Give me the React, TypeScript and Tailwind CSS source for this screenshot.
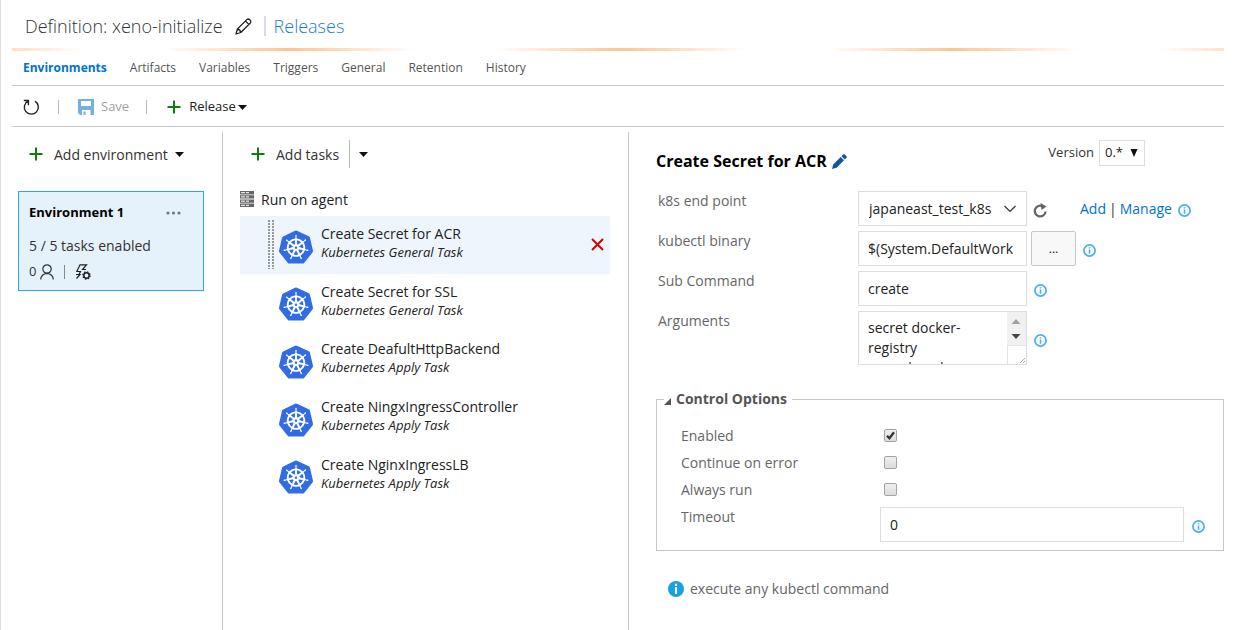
import React, { useState } from "react";
import { SiKubernetes } from "react-icons/si";

const tabs = ["Environments", "Artifacts", "Variables", "Triggers", "General", "Retention", "History"];

const tasks = [
  { name: "Create Secret for ACR", kind: "Kubernetes General Task" },
  { name: "Create Secret for SSL", kind: "Kubernetes General Task" },
  { name: "Create DeafultHttpBackend", kind: "Kubernetes Apply Task" },
  { name: "Create NingxIngressController", kind: "Kubernetes Apply Task" },
  { name: "Create NginxIngressLB", kind: "Kubernetes Apply Task" },
];

function Plus() {
  return (
    <svg width="14" height="14" viewBox="0 0 14 14" aria-hidden="true" className="shrink-0">
      <path d="M7 0.5V13.5M0.5 7H13.5" stroke="#107c10" strokeWidth="2" />
    </svg>
  );
}

function Caret() {
  return (
    <svg width="9" height="5" viewBox="0 0 9 5" aria-hidden="true" className="shrink-0">
      <path d="M0 0H9L4.5 5Z" fill="#111" />
    </svg>
  );
}

function InfoButton({ label }: { label: string }) {
  return (
    <button type="button" aria-label={label} className="mt-1 shrink-0">
      <svg width="13" height="13" viewBox="0 0 13 13" className="block">
        <circle cx="6.5" cy="6.5" r="5.6" fill="#fff" stroke="#45b2ea" strokeWidth="1.7" />
        <path d="M6.5 3.2V4.6M6.5 5.6V9.8" stroke="#45b2ea" strokeWidth="1.6" />
      </svg>
    </button>
  );
}

function KubernetesLogo() {
  return (
    <svg width="34" height="34" viewBox="0 0 24 24" aria-hidden="true" className="shrink-0">
      <circle cx="12" cy="12" r="9" fill="#fff" />
      <SiKubernetes size={24} color="#326ce5" />
    </svg>
  );
}

function OutlinePencil() {
  return (
    <svg width="17" height="17" viewBox="0 0 17 17" fill="none" stroke="#222" strokeWidth="1.3" strokeLinejoin="round">
      <path d="M1 16L2.4 11L11.8 1.6Q13.2 0.3 14.8 1.8Q16.5 3.6 15.3 5L5.8 14.5ZM2.4 11Q5.2 11.6 5.8 14.5M10.4 3L13.9 6.4" />
    </svg>
  );
}

function Accent() {
  return (
    <div className="h-[3px] bg-[repeating-linear-gradient(90deg,#fdc490_0px,#fee0c6_60px,#ffffff_126px,#ffffff_206px,#fee0c6_272px,#fdc490_332px)] bg-[position:-55px_0px] bg-[length:332px_3px]" />
  );
}

function Checkbox({ id, initial }: { id: string; initial: boolean }) {
  const [on, setOn] = useState(initial);
  return (
    <span className="relative ml-1 flex">
      <input
        id={id}
        type="checkbox"
        checked={on}
        onChange={() => setOn(!on)}
        className="h-[13px] w-[13px] appearance-none rounded-[2px] border border-[#a3a3a3] bg-linear-to-b from-[#efefef] to-[#dcdcdc]"
      />
      {on && (
        <svg width="13" height="13" viewBox="0 0 13 13" aria-hidden="true" className="pointer-events-none absolute inset-0">
          <path d="M3 6.8L5.4 9.3L10 3.2" fill="none" stroke="#333" strokeWidth="2.3" />
        </svg>
      )}
    </span>
  );
}

function Field({ id, label, children }: { id: string; label: string; children: React.ReactNode }) {
  return (
    <div className="flex items-start">
      <label htmlFor={id} className="w-[202px] shrink-0 pl-0.5 leading-5 text-[#666]">
        {label}
      </label>
      <div className="flex items-center">{children}</div>
    </div>
  );
}

function Header() {
  return (
    <header>
      <div className="flex h-12 items-center pt-1 pl-[13px] text-[18px] font-light">
        <h1 className="text-[#333]">Definition: xeno-initialize</h1>
        <button type="button" aria-label="Rename definition" className="ml-3">
          <OutlinePencil />
        </button>
        <a href="#releases" className="ml-3 border-l-2 border-[#dcdce6] pl-2 leading-5 text-[#1a7fd0]">
          Releases
        </a>
      </div>
      <Accent />
      <nav className="flex h-[35px] items-center gap-[23px] border-b border-[#c8c8c8] pl-[11px] text-[12px] text-[#555]">
        {tabs.map((tab, i) => (
          <a key={tab} href={"#" + tab.toLowerCase()} className={i === 0 ? "font-bold text-[#0072d0]" : ""}>
            {tab}
          </a>
        ))}
      </nav>
      <div className="flex h-[41px] items-center border-b border-[#c8c8c8] pt-0.5 pl-[11px] text-[13px]">
        <button type="button" aria-label="Refresh">
          <svg width="17" height="17" viewBox="0 0 17 17" fill="none" stroke="#222" strokeWidth="1.4">
            <path d="M5.2 1.9A7 7 0 1 0 12 2.2M0.8 1.5H5.4V6.3" />
          </svg>
        </button>
        <span className="ml-[18px] h-3.5 w-px bg-[#bbb]" />
        <button type="button" disabled className="ml-[19px] flex items-center gap-[7px] text-[#a0a0a0]">
          <svg width="16" height="16" viewBox="0 0 16 16" aria-hidden="true">
            <path
              fillRule="evenodd"
              fill="#77afe0"
              d="M0 0H16V16H12.500V11H4V16H2L0 14ZM3 2V7H13V2ZM5.500 12.500H7.500V16H5.500Z"
            />
          </svg>
          Save
        </button>
        <span className="ml-[17px] h-3.5 w-px bg-[#bbb]" />
        <button type="button" className="ml-5 flex items-center text-[#222]">
          <Plus />
          <span className="mr-0.5 ml-2">Release</span>
          <Caret />
        </button>
      </div>
    </header>
  );
}

function EnvironmentPanel() {
  return (
    <section className="w-[211px] shrink-0 border-r border-[#c8c8c8] pr-[18px] pl-1.5">
      <button type="button" className="mt-3 ml-[11px] flex h-5 items-center text-[#333]">
        <Plus />
        <span className="mr-[7px] ml-[11px]">Add environment</span>
        <Caret />
      </button>
      <article className="mt-[27px] h-[100px] border border-[#2ea6e4] bg-[#e5f2fb] px-2.5 pt-[11px]">
        <div className="flex h-5 items-center justify-between">
          <h2 className="text-[13px] font-bold text-black">Environment 1</h2>
          <button type="button" aria-label="Environment actions" className="mr-3">
            <svg width="15" height="4" viewBox="0 0 15 4" fill="#777" className="block">
              <circle cx="2" cy="2" r="1.6" />
              <circle cx="7.500" cy="2" r="1.6" />
              <circle cx="13" cy="2" r="1.6" />
            </svg>
          </button>
        </div>
        <p className="mt-[13px] leading-5 text-[#333]">5 / 5 tasks enabled</p>
        <div className="mt-1.5 flex h-5 items-center text-[13px] text-[#333]">
          0
          <svg width="14" height="16" viewBox="0 0 14 16" fill="none" stroke="#333" strokeWidth="1.2" className="ml-1" aria-hidden="true">
            <circle cx="7" cy="5" r="4.200" />
            <path d="M0.700 15.500Q1.200 9.800 7 9.300Q12.800 9.800 13.300 15.500" />
          </svg>
          <span className="mx-2.5 h-3.5 w-px bg-[#888]" />
          <svg width="16" height="16" viewBox="0 0 16 16" fill="none" stroke="#222" strokeWidth="1.200" aria-hidden="true">
            <path d="M11 5.500H7.500L11.500 0.800H5L1.800 7.500H5.500L4 10.500M1 10.500H5L1.500 14.500" />
            <circle cx="11.500" cy="11.500" r="2.700" strokeWidth="1.500" />
            <circle cx="11.500" cy="11.500" r="3.700" strokeDasharray="1.450 1.450" />
          </svg>
        </div>
      </article>
    </section>
  );
}

function DragHandle() {
  return (
    <svg width="6" height="49" viewBox="0 0 6 49" aria-hidden="true" className="shrink-0">
      <path d="M1 0V49M5 0V49" stroke="#999" strokeWidth="2" strokeDasharray="2 1" />
    </svg>
  );
}

function TaskPanel() {
  return (
    <section className="w-[406px] shrink-0 border-r border-[#c8c8c8] pr-[18px] pl-[17px]">
      <div className="mt-2 ml-[11px] flex h-7 items-center text-[#333]">
        <button type="button" className="flex items-center gap-[11px]">
          <Plus />
          Add tasks
        </button>
        <button type="button" aria-label="More task options" className="ml-2.5 flex h-7 items-center border-l border-[#bbb] pl-[9px]">
          <Caret />
        </button>
      </div>
      <div className="mt-[21px] flex h-5 items-center gap-[7px] text-[#222]">
        <svg width="14" height="16" viewBox="0 0 14 16" aria-hidden="true" className="shrink-0">
          <path d="M0 0H14V3.400H0ZM0 4.200H14V7.600H0ZM0 8.400H14V11.800H0ZM0 12.600H14V16H0Z" fill="#666" />
          <path d="M1 1.700H5M6 1.700H9M1 5.900H5M6 5.900H9M1 10.100H5M6 10.100H9M1 14.300H5M6 14.300H9" stroke="#e4e4e4" strokeWidth="1.200" />
        </svg>
        Run on agent
      </div>
      <ul className="mt-[7px] grid h-72 auto-rows-fr">
        {tasks.map((task, i) => (
          <li key={task.name} className={"flex items-center pr-1.5 pl-[28px] " + (i === 0 ? "bg-[#eef5fc]" : "")}>
            <span className="flex w-[11px] shrink-0">{i === 0 && <DragHandle />}</span>
            <span className="mt-1 flex">
              <KubernetesLogo />
            </span>
            <span className="ml-2 flex-1 pb-[3px]">
              <span className="block leading-[19px] text-[#222]">{task.name}</span>
              <span className="block text-[13px] leading-[19px] text-[#222] italic">{task.kind}</span>
            </span>
            {i === 0 && (
              <button type="button" aria-label="Remove task">
                <svg width="13" height="13" viewBox="0 0 13 13" className="block">
                  <path d="M1 1L12 12M12 1L1 12" stroke="#d90000" strokeWidth="2" />
                </svg>
              </button>
            )}
          </li>
        ))}
      </ul>
    </section>
  );
}

function DetailPanel() {
  return (
    <section className="min-w-0 flex-1 pl-[27px]">
      <div className="flex h-[59px] items-start justify-between pr-[79px]">
        <h2 className="mt-[19px] flex items-center gap-[5px] text-[16px] leading-5 font-bold text-black">
          Create Secret for ACR
          <button type="button" aria-label="Rename task">
            <svg width="15" height="15" viewBox="0 0 15 15" fill="#0b57a8" className="block">
              <path d="M0 15L1.200 10.500L8.700 3L12 6.300L4.500 13.800ZM9.500 2.200L11.200 0.500Q12 -0.200 12.800 0.500L14.500 2.200Q15.200 3 14.500 3.800L12.800 5.500Z" />
            </svg>
          </button>
        </h2>
        <div className="mt-2 flex items-center gap-[5px] text-[#333]">
          <label htmlFor="version" className="text-[13px]">Version</label>
          <span className="relative flex items-center">
            <select id="version" className="h-[26px] w-[46px] appearance-none border border-[#ddd] bg-white pl-[5px] text-[13px] text-[#222]">
              <option>0.*</option>
            </select>
            <svg width="8" height="8" viewBox="0 0 8 8" aria-hidden="true" className="pointer-events-none absolute right-[7px]">
              <path d="M0.500 0H7.500L4 8Z" fill="#111" />
            </svg>
          </span>
        </div>
      </div>

      <div className="flex flex-col gap-[5px]">
        <Field id="endpoint" label="k8s end point">
          <span className="relative flex items-center">
            <select id="endpoint" className="h-[35px] w-[169px] appearance-none border border-[#ddd] bg-white pl-2.5 text-[#222]">
              <option>japaneast_test_k8s</option>
            </select>
            <svg width="12" height="8" viewBox="0 0 12 8" fill="none" stroke="#333" strokeWidth="1.200" aria-hidden="true" className="pointer-events-none absolute right-[11px]">
              <path d="M0.500 1L6 6.500L11.500 1" />
            </svg>
          </span>
          <button type="button" aria-label="Refresh end points" className="mt-1 ml-1.5">
            <svg width="15" height="15" viewBox="0 0 15 15" className="block">
              <path d="M9.800 3.300A5.400 5.400 0 1 0 12.600 8.500" fill="none" stroke="#666" strokeWidth="2.300" />
              <path d="M7.500 0L13.500 3.500L8.500 7Z" fill="#666" />
            </svg>
          </button>
          <span className="mr-1.5 ml-8 flex gap-[3px] text-[#0072d0]">
            <a href="#add">Add</a>
            <span className="text-[#333]">|</span>
            <a href="#manage">Manage</a>
          </span>
          <InfoButton label="About k8s end point" />
        </Field>
        <Field id="binary" label="kubectl binary">
          <input id="binary" defaultValue="$(System.DefaultWork" className="h-[35px] w-[169px] border border-[#ddd] bg-white pr-1 pl-[9px] text-[#222]" />
          <button type="button" aria-label="Browse" className="mr-[7px] ml-1 h-[35px] w-[45px] rounded-[2px] border border-[#c8c8c8] bg-[#f8f8f8] text-xs text-[#222]">
            ...
          </button>
          <InfoButton label="About kubectl binary" />
        </Field>
        <Field id="command" label="Sub Command">
          <input id="command" defaultValue="create" className="mr-[7px] h-[35px] w-[169px] border border-[#ddd] bg-white px-[9px] text-[#222]" />
          <InfoButton label="About Sub Command" />
        </Field>
        <Field id="arguments" label="Arguments">
          <div className="mr-[7px] flex h-[54px] w-[169px] border border-[#ddd]">
            <textarea
              id="arguments"
              defaultValue={"secret docker-registry\nazure.key-d"}
              className="min-w-0 flex-1 resize-none overflow-hidden pt-1.5 pl-[9px] leading-5 text-[#222]"
            />
            <svg width="19" height="52" viewBox="0 0 19 52" aria-hidden="true" className="shrink-0">
              <path d="M0 0H19V33H0Z" fill="#f1f1f1" />
              <path d="M0.500 33V52M0 33.500H19" stroke="#e4e4e4" />
              <path d="M4.500 12H13.500L9 7Z" fill="#a0a0a0" />
              <path d="M4.500 22H13.500L9 27Z" fill="#444" />
              <path d="M13 51L18 46M16 51L18 49" stroke="#999" strokeWidth="0.800" />
            </svg>
          </div>
          <InfoButton label="About Arguments" />
        </Field>
      </div>

      <fieldset className="mt-6 min-w-0 border border-[#c8c8c8] pr-[18px] pb-2 pl-6">
        <legend className="-ml-[17px] flex items-center gap-[5px] pr-[5px] leading-5 font-bold text-[#555]">
          <svg width="7" height="7" viewBox="0 0 7 7" aria-hidden="true" className="mt-1">
            <path d="M7 0V7H0Z" fill="#555" />
          </svg>
          Control Options
        </legend>
        <div className="mt-[13px] text-[#666]">
          <div className="flex h-[27px] items-center">
            <label htmlFor="enabled" className="w-[199px]">Enabled</label>
            <Checkbox id="enabled" initial={true} />
          </div>
          <div className="flex h-[27px] items-center">
            <label htmlFor="continue" className="w-[199px]">Continue on error</label>
            <Checkbox id="continue" initial={false} />
          </div>
          <div className="flex h-[27px] items-center">
            <label htmlFor="always" className="w-[199px]">Always run</label>
            <Checkbox id="always" initial={false} />
          </div>
          <div className="mt-1 flex items-start">
            <label htmlFor="timeout" className="w-[199px] shrink-0 leading-5">Timeout</label>
            <div className="flex min-w-0 flex-1 items-center gap-2">
              <input id="timeout" defaultValue="0" className="h-[35px] min-w-0 flex-1 border border-[#ddd] px-[9px] text-[#222]" />
              <InfoButton label="About Timeout" />
            </div>
          </div>
        </div>
      </fieldset>

      <p className="mt-7 ml-3 flex items-center gap-1.5 leading-5 text-[#666]">
        <svg width="16" height="16" viewBox="0 0 16 16" aria-hidden="true">
          <circle cx="8" cy="8" r="8" fill="#1ba1e2" />
          <path d="M8 2.800V5M8 6.300V13" stroke="#fff" strokeWidth="2" />
        </svg>
        execute any kubectl command
      </p>
    </section>
  );
}

export default function App() {
  return (
    <div className="flex min-h-screen flex-col border-l border-[#ddd] bg-white pr-[11px] pl-[11px] font-['Open_Sans','Noto_Sans',sans-serif] text-[14px]">
      <Header />
      <main className="mt-[5px] flex flex-1">
        <EnvironmentPanel />
        <TaskPanel />
        <DetailPanel />
      </main>
    </div>
  );
}
